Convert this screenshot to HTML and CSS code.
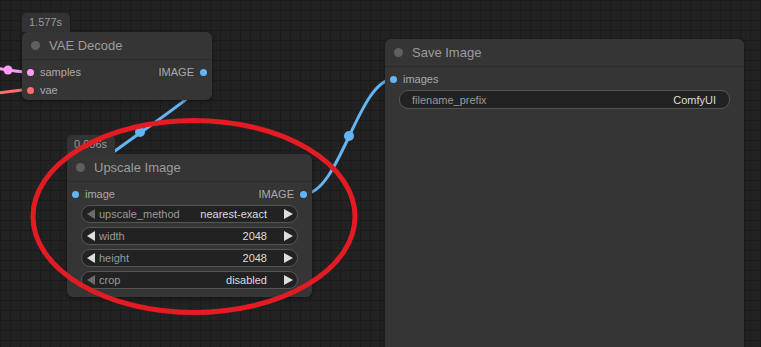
FILE: index.html
```html
<!DOCTYPE html>
<html>
<head>
<meta charset="UTF-8">
<title>ComfyUI - Upscale Image</title>
<link rel="stylesheet" href="styles.css">
</head>
<body>
<div class="canvas">
	<svg class="links" width="761" height="347" viewBox="0 0 761 347">
		<path d="M-10,67 L8,70 C16,71 22,72 31,72" stroke="#ff9cf9" stroke-width="3" fill="none"/>
		<circle cx="8" cy="70" r="4.5" fill="#ff9cf9"/>
		<path d="M-10,94 L22,90 L31,90" stroke="#ff6e6e" stroke-width="3" fill="none"/>
		<path d="M204,72 C248,72 32,194 76,194" stroke="#64b5f6" stroke-width="3" fill="none"/>
		<circle cx="140" cy="132" r="5" fill="#64b5f6"/>
		<path d="M304,194 C340,194 358,79 394,79" stroke="#64b5f6" stroke-width="3" fill="none"/>
		<circle cx="349" cy="136" r="5" fill="#64b5f6"/>
	</svg>

	<div class="node node-vae">
		<div class="badge">1.577s</div>
		<div class="node-title"><span class="title-dot"></span>VAE Decode</div>
		<div class="slots">
			<div class="slot-row">
				<div class="slot-in"><span class="dot pink"></span>samples</div>
				<div class="slot-out">IMAGE<span class="dot blue"></span></div>
			</div>
			<div class="slot-row">
				<div class="slot-in"><span class="dot red"></span>vae</div>
			</div>
		</div>
	</div>

	<div class="node node-upscale">
		<div class="badge">0.006s</div>
		<div class="node-title"><span class="title-dot"></span>Upscale Image</div>
		<div class="slots">
			<div class="slot-row">
				<div class="slot-in"><span class="dot blue"></span>image</div>
				<div class="slot-out">IMAGE<span class="dot blue"></span></div>
			</div>
		</div>
		<div class="widgets">
			<div class="widget">
				<span class="arrow-l dim"></span>
				<span class="w-label">upscale_method</span>
				<span class="w-value">nearest-exact</span>
				<span class="arrow-r"></span>
			</div>
			<div class="widget">
				<span class="arrow-l"></span>
				<span class="w-label">width</span>
				<span class="w-value">2048</span>
				<span class="arrow-r"></span>
			</div>
			<div class="widget">
				<span class="arrow-l"></span>
				<span class="w-label">height</span>
				<span class="w-value">2048</span>
				<span class="arrow-r"></span>
			</div>
			<div class="widget">
				<span class="arrow-l dim"></span>
				<span class="w-label">crop</span>
				<span class="w-value">disabled</span>
				<span class="arrow-r"></span>
			</div>
		</div>
	</div>

	<div class="node node-save">
		<div class="node-title"><span class="title-dot"></span>Save Image</div>
		<div class="slots">
			<div class="slot-row">
				<div class="slot-in"><span class="dot blue"></span>images</div>
			</div>
		</div>
		<div class="widgets">
			<div class="widget text">
				<span class="w-label">filename_prefix</span>
				<span class="w-value">ComfyUI</span>
			</div>
		</div>
	</div>

	<svg class="mark" width="761" height="347" viewBox="0 0 761 347">
		<ellipse cx="194" cy="216.5" rx="161" ry="96" stroke="#e31b23" stroke-width="5" fill="none"/>
	</svg>
</div>
</body>
</html>
```

FILE: styles.css
```css
*{margin:0;padding:0;box-sizing:border-box;}
body{background:#212121;font-family:"Liberation Sans",Arial,sans-serif;overflow:hidden;}
.canvas{position:relative;width:761px;height:347px;overflow:hidden;background-color:#222;
	background-image:linear-gradient(#1b1b1b 1px,transparent 1px),linear-gradient(90deg,#1b1b1b 1px,transparent 1px);
	background-size:10px 10px;
}
.links, .mark{position:absolute;left:0;top:0;}
.mark{z-index:5;}

.node{position:absolute;z-index:2;background:#353535;border-radius:6px;box-shadow:0 1px 4px rgba(0,0,0,.45);}
.node-vae{left:22px;top:32px;width:190px;height:68px;}
.node-upscale{left:67px;top:154px;width:245px;height:143px;}
.node-save{left:385px;top:39px;width:359px;height:330px;}

.badge{position:absolute;left:0;bottom:100%;height:19px;line-height:19px;padding:0 8px 0 7px;background:#333;border-radius:5px 5px 0 0;color:#9a9a9a;font-size:11px;}
.node-title{height:28px;display:flex;align-items:center;padding-left:9px;border-bottom:1px solid #2b2b2b;color:#9c9c9c;font-size:13px;}
.title-dot{width:9px;height:9px;border-radius:50%;background:#5f5f5f;margin-right:9px;}

.slots{padding-top:3px;}
.slot-row{height:18px;display:flex;align-items:center;justify-content:space-between;font-size:11px;color:#aaa;}
.slot-in{display:flex;align-items:center;padding-left:5px;}
.slot-in .dot{margin-right:6px;}
.slot-out{display:flex;align-items:center;padding-right:5px;margin-left:auto;}
.slot-out .dot{margin-left:6px;}
.dot{width:7px;height:7px;border-radius:50%;}
.dot.pink{background:#ff9cf9;}
.dot.red{background:#ff6e6e;}
.dot.blue{background:#64b5f6;}

.widgets{display:flex;flex-direction:column;gap:4px;padding:2px 14px 8px;}
.widget{height:18px;display:flex;align-items:center;padding:0 4px 0 5px;background:#222;border:1px solid #555;border-radius:9px;font-size:11px;}
.widget.text{height:19px;padding:0 13px 0 12px;}
.w-label{flex:1;color:#999;}
.w-value{color:#ddd;}
.arrow-l{width:0;height:0;margin-right:4px;border-top:5px solid transparent;border-bottom:5px solid transparent;border-right:8px solid #ddd;}
.arrow-l.dim{border-right-color:#6c6c6c;}
.arrow-r{width:0;height:0;margin-left:17px;border-top:5px solid transparent;border-bottom:5px solid transparent;border-left:9px solid #ddd;}
```
